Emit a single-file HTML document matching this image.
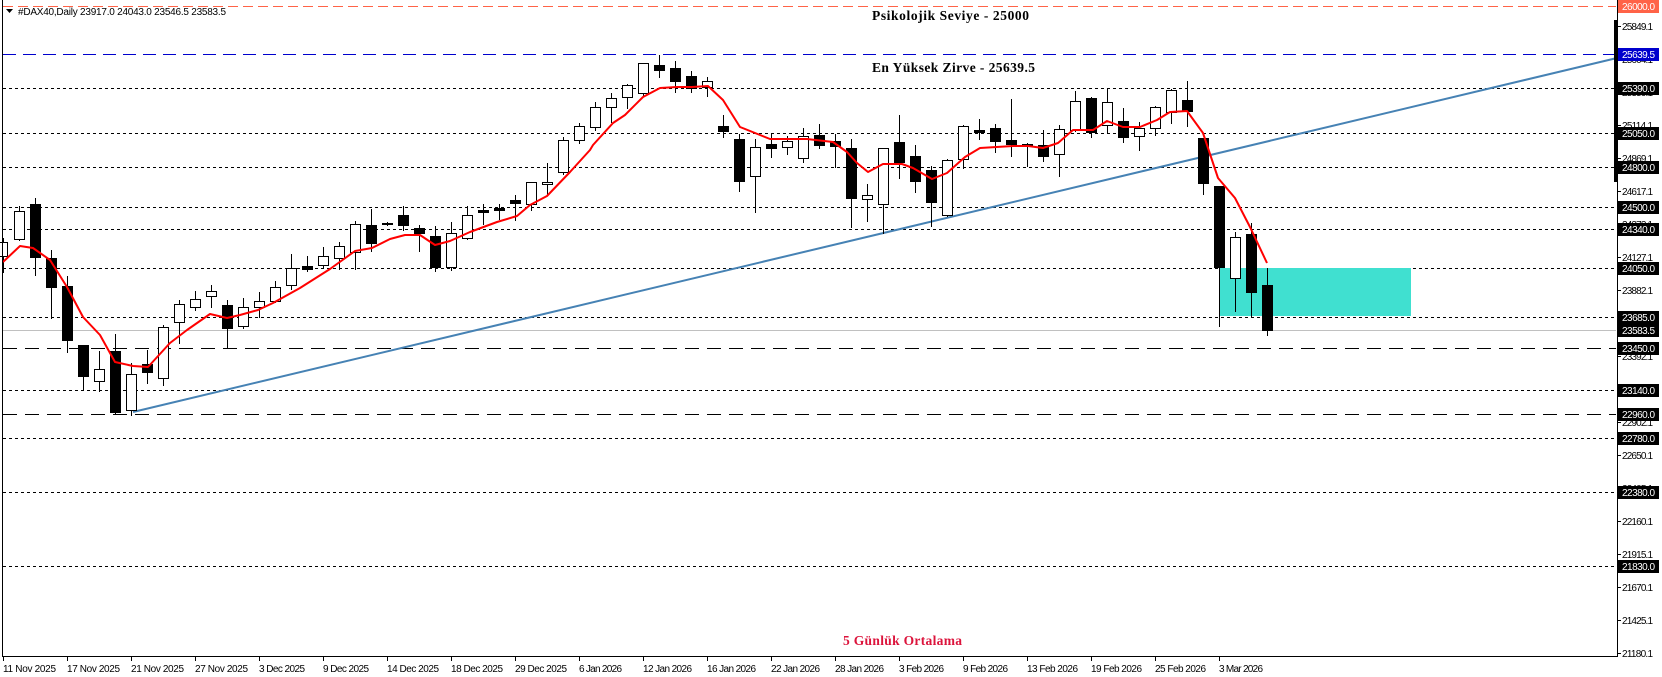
<!DOCTYPE html>
<html><head><meta charset="utf-8"><style>
html,body{margin:0;padding:0;background:#fff;}
svg{display:block;}
.ax{font-family:"Liberation Sans",sans-serif;font-size:10px;fill:#000;}
.hl{font-family:"Liberation Sans",sans-serif;font-size:10px;fill:#fff;}
.an{font-family:"Liberation Serif",serif;font-weight:bold;font-size:13.5px;fill:#000;}
</style></head><body>
<svg width="1662" height="677" viewBox="0 0 1662 677" xmlns="http://www.w3.org/2000/svg">
<rect width="1662" height="677" fill="#fff"/>
<g shape-rendering="crispEdges" stroke-width="1" fill="none">
<line x1="3" y1="6.5" x2="1616" y2="6.5" stroke="#ff6347" stroke-dasharray="10 5"/>
<line x1="3" y1="54.5" x2="1616" y2="54.5" stroke="#0000cd" stroke-dasharray="13 7"/>
<g stroke="#000" stroke-dasharray="3 3">
<line x1="3" y1="88.5" x2="1616" y2="88.5"/>
<line x1="3" y1="133.5" x2="1616" y2="133.5"/>
<line x1="3" y1="167.5" x2="1616" y2="167.5"/>
<line x1="3" y1="207.5" x2="1616" y2="207.5"/>
<line x1="3" y1="229.5" x2="1616" y2="229.5"/>
<line x1="3" y1="268.5" x2="1616" y2="268.5"/>
<line x1="3" y1="317.5" x2="1616" y2="317.5"/>
<line x1="3" y1="390.5" x2="1616" y2="390.5"/>
<line x1="3" y1="438.5" x2="1616" y2="438.5"/>
<line x1="3" y1="492.5" x2="1616" y2="492.5"/>
<line x1="3" y1="566.5" x2="1616" y2="566.5"/>
</g>
<g stroke="#000" stroke-dasharray="14 8">
<line x1="3" y1="348.5" x2="1616" y2="348.5"/>
<line x1="3" y1="414.5" x2="1616" y2="414.5"/>
</g>
<line x1="3" y1="330.5" x2="1616" y2="330.5" stroke="#c0c0c0"/>
</g>
<line x1="133" y1="412" x2="1617" y2="58" stroke="#4682b4" stroke-width="2"/>
<rect x="1220" y="268" width="191" height="48" fill="#40e0d0"/>
<g shape-rendering="crispEdges">
<g stroke="#000" stroke-width="1">
<line x1="3.5" y1="238" x2="3.5" y2="273"/><line x1="19.5" y1="206" x2="19.5" y2="241"/><line x1="35.5" y1="198" x2="35.5" y2="276"/><line x1="51.5" y1="250" x2="51.5" y2="319"/><line x1="67.5" y1="276" x2="67.5" y2="353"/><line x1="83.5" y1="345" x2="83.5" y2="391"/><line x1="99.5" y1="351" x2="99.5" y2="392"/><line x1="115.5" y1="334" x2="115.5" y2="414"/><line x1="131.5" y1="363" x2="131.5" y2="416"/><line x1="147.5" y1="350" x2="147.5" y2="384"/><line x1="163.5" y1="325" x2="163.5" y2="386"/><line x1="179.5" y1="300" x2="179.5" y2="344"/><line x1="195.5" y1="291" x2="195.5" y2="311"/><line x1="211.5" y1="285" x2="211.5" y2="308"/><line x1="227.5" y1="300" x2="227.5" y2="348"/><line x1="243.5" y1="298" x2="243.5" y2="329"/><line x1="259.5" y1="292" x2="259.5" y2="318"/><line x1="275.5" y1="281" x2="275.5" y2="303"/><line x1="291.5" y1="254" x2="291.5" y2="290"/><line x1="307.5" y1="256" x2="307.5" y2="272"/><line x1="323.5" y1="247" x2="323.5" y2="268"/><line x1="339.5" y1="242" x2="339.5" y2="270"/><line x1="355.5" y1="221" x2="355.5" y2="270"/><line x1="371.5" y1="209" x2="371.5" y2="252"/><line x1="387.5" y1="222" x2="387.5" y2="226"/><line x1="403.5" y1="206" x2="403.5" y2="231"/><line x1="419.5" y1="225" x2="419.5" y2="252"/><line x1="435.5" y1="226" x2="435.5" y2="272"/><line x1="451.5" y1="222" x2="451.5" y2="271"/><line x1="467.5" y1="206" x2="467.5" y2="240"/><line x1="483.5" y1="204" x2="483.5" y2="225"/><line x1="499.5" y1="204" x2="499.5" y2="220"/><line x1="515.5" y1="195" x2="515.5" y2="221"/><line x1="531.5" y1="182" x2="531.5" y2="211"/><line x1="547.5" y1="163" x2="547.5" y2="195"/><line x1="563.5" y1="137" x2="563.5" y2="175"/><line x1="579.5" y1="123" x2="579.5" y2="144"/><line x1="595.5" y1="102" x2="595.5" y2="131"/><line x1="611.5" y1="93" x2="611.5" y2="123"/><line x1="627.5" y1="84" x2="627.5" y2="109"/><line x1="643.5" y1="63" x2="643.5" y2="97"/><line x1="659.5" y1="55" x2="659.5" y2="78"/><line x1="675.5" y1="61" x2="675.5" y2="93"/><line x1="691.5" y1="71" x2="691.5" y2="93"/><line x1="707.5" y1="77" x2="707.5" y2="97"/><line x1="723.5" y1="115" x2="723.5" y2="138"/><line x1="739.5" y1="134" x2="739.5" y2="192"/><line x1="755.5" y1="139" x2="755.5" y2="213"/><line x1="771.5" y1="134" x2="771.5" y2="158"/><line x1="787.5" y1="136" x2="787.5" y2="155"/><line x1="803.5" y1="128" x2="803.5" y2="163"/><line x1="819.5" y1="124" x2="819.5" y2="149"/><line x1="835.5" y1="134" x2="835.5" y2="168"/><line x1="851.5" y1="139" x2="851.5" y2="228"/><line x1="867.5" y1="184" x2="867.5" y2="222"/><line x1="883.5" y1="148" x2="883.5" y2="234"/><line x1="899.5" y1="115" x2="899.5" y2="179"/><line x1="915.5" y1="145" x2="915.5" y2="193"/><line x1="931.5" y1="166" x2="931.5" y2="227"/><line x1="947.5" y1="159" x2="947.5" y2="217"/><line x1="963.5" y1="125" x2="963.5" y2="169"/><line x1="979.5" y1="119" x2="979.5" y2="140"/><line x1="995.5" y1="124" x2="995.5" y2="153"/><line x1="1011.5" y1="99" x2="1011.5" y2="157"/><line x1="1027.5" y1="143" x2="1027.5" y2="167"/><line x1="1043.5" y1="130" x2="1043.5" y2="162"/><line x1="1059.5" y1="125" x2="1059.5" y2="177"/><line x1="1075.5" y1="91" x2="1075.5" y2="132"/><line x1="1091.5" y1="97" x2="1091.5" y2="138"/><line x1="1107.5" y1="88" x2="1107.5" y2="134"/><line x1="1123.5" y1="108" x2="1123.5" y2="143"/><line x1="1139.5" y1="122" x2="1139.5" y2="151"/><line x1="1155.5" y1="106" x2="1155.5" y2="136"/><line x1="1171.5" y1="89" x2="1171.5" y2="124"/><line x1="1187.5" y1="81" x2="1187.5" y2="127"/><line x1="1203.5" y1="138" x2="1203.5" y2="195"/><line x1="1219.5" y1="186" x2="1219.5" y2="327"/><line x1="1235.5" y1="232" x2="1235.5" y2="312"/><line x1="1251.5" y1="223" x2="1251.5" y2="317"/><line x1="1267.5" y1="268" x2="1267.5" y2="336"/>
</g>
<g fill="#000">
<rect x="30" y="204" width="11" height="54"/><rect x="46" y="258" width="11" height="30"/><rect x="62" y="286" width="11" height="55"/><rect x="78" y="345" width="11" height="32"/><rect x="110" y="351" width="11" height="62"/><rect x="142" y="364" width="11" height="9"/><rect x="222" y="305" width="11" height="24"/><rect x="302" y="266" width="11" height="4"/><rect x="366" y="225" width="11" height="19"/><rect x="382" y="223" width="11" height="2"/><rect x="398" y="215" width="11" height="11"/><rect x="414" y="228" width="11" height="6"/><rect x="430" y="236" width="11" height="32"/><rect x="478" y="210" width="11" height="3"/><rect x="494" y="208" width="11" height="3"/><rect x="510" y="200" width="11" height="4"/><rect x="654" y="65" width="11" height="6"/><rect x="670" y="68" width="11" height="14"/><rect x="686" y="76" width="11" height="13"/><rect x="718" y="126" width="11" height="6"/><rect x="734" y="139" width="11" height="43"/><rect x="766" y="144" width="11" height="5"/><rect x="814" y="135" width="11" height="11"/><rect x="830" y="141" width="11" height="6"/><rect x="846" y="148" width="11" height="51"/><rect x="894" y="142" width="11" height="21"/><rect x="910" y="156" width="11" height="26"/><rect x="926" y="170" width="11" height="33"/><rect x="974" y="130" width="11" height="3"/><rect x="990" y="128" width="11" height="14"/><rect x="1006" y="140" width="11" height="5"/><rect x="1022" y="144" width="11" height="2"/><rect x="1038" y="145" width="11" height="12"/><rect x="1086" y="98" width="11" height="35"/><rect x="1118" y="121" width="11" height="17"/><rect x="1182" y="100" width="11" height="12"/><rect x="1198" y="138" width="11" height="46"/><rect x="1214" y="186" width="11" height="82"/><rect x="1246" y="234" width="11" height="59"/><rect x="1262" y="285" width="11" height="46"/>
</g>
<g fill="#fff" stroke="#000">
<rect x="-1.5" y="242.5" width="9" height="14"/><rect x="14.5" y="211.5" width="10" height="28"/><rect x="94.5" y="369.5" width="10" height="12"/><rect x="126.5" y="374.5" width="10" height="36"/><rect x="158.5" y="327.5" width="10" height="51"/><rect x="174.5" y="304.5" width="10" height="18"/><rect x="190.5" y="299.5" width="10" height="8"/><rect x="206.5" y="291.5" width="10" height="5"/><rect x="238.5" y="307.5" width="10" height="19"/><rect x="254.5" y="301.5" width="10" height="6"/><rect x="270.5" y="287.5" width="10" height="14"/><rect x="286.5" y="268.5" width="10" height="17"/><rect x="318.5" y="256.5" width="10" height="9"/><rect x="334.5" y="246.5" width="10" height="12"/><rect x="350.5" y="224.5" width="10" height="28"/><rect x="446.5" y="233.5" width="10" height="34"/><rect x="462.5" y="215.5" width="10" height="23"/><rect x="526.5" y="182.5" width="10" height="22"/><rect x="542.5" y="182.5" width="10" height="2"/><rect x="558.5" y="140.5" width="10" height="32"/><rect x="574.5" y="126.5" width="10" height="14"/><rect x="590.5" y="107.5" width="10" height="20"/><rect x="606.5" y="98.5" width="10" height="9"/><rect x="622.5" y="85.5" width="10" height="12"/><rect x="638.5" y="63.5" width="10" height="30"/><rect x="702.5" y="81.5" width="10" height="6"/><rect x="750.5" y="147.5" width="10" height="29"/><rect x="782.5" y="141.5" width="10" height="6"/><rect x="798.5" y="136.5" width="10" height="22"/><rect x="862.5" y="195.5" width="10" height="4"/><rect x="878.5" y="148.5" width="10" height="56"/><rect x="942.5" y="160.5" width="10" height="55"/><rect x="958.5" y="126.5" width="10" height="33"/><rect x="1054.5" y="129.5" width="10" height="25"/><rect x="1070.5" y="101.5" width="10" height="29"/><rect x="1102.5" y="102.5" width="10" height="23"/><rect x="1134.5" y="128.5" width="10" height="8"/><rect x="1150.5" y="107.5" width="10" height="21"/><rect x="1166.5" y="90.5" width="10" height="22"/><rect x="1230.5" y="237.5" width="10" height="41"/>
</g>
</g>
<polyline fill="none" stroke="#ff0000" stroke-width="2" stroke-linejoin="round" points="3,262 20,246 33,248 50,260 67,287 83,317 100,335 115,362 133,366 148,367 170,343 187,330 210,314 227,318 240,315 258,310 273,303 300,288 330,269 355,251 372,248 390,239 405,235 420,235 435,245 450,241 470,232 497,222 517,216 530,205 547,196 570,172 590,150 593,145 613,123 625,115 643,97 660,88 677,87 692,87 708,86 723,100 740,127 760,135 770,139 807,139 833,142 847,152 857,163 868,172 883,164 902,164 913,168 932,179 947,173 965,157 980,148 1013,146 1028,146 1043,148 1058,143 1073,130 1093,130 1107,121 1123,127 1140,127 1157,120 1170,112 1187,111 1203,133 1218,178 1235,198 1250,227 1267,263"/>
<g shape-rendering="crispEdges" stroke="#000">
<line x1="2.5" y1="0" x2="2.5" y2="656"/>
<line x1="2" y1="656.5" x2="1618" y2="656.5"/>
<line x1="1617.5" y1="0" x2="1617.5" y2="657"/>
</g>
<rect x="1614" y="20" width="3" height="162" fill="#000"/>
<g shape-rendering="crispEdges" stroke="#000">
<line x1="1618" y1="26.5" x2="1621" y2="26.5"/><line x1="1618" y1="59.5" x2="1621" y2="59.5"/><line x1="1618" y1="92.5" x2="1621" y2="92.5"/><line x1="1618" y1="125.5" x2="1621" y2="125.5"/><line x1="1618" y1="158.5" x2="1621" y2="158.5"/><line x1="1618" y1="191.5" x2="1621" y2="191.5"/><line x1="1618" y1="224.5" x2="1621" y2="224.5"/><line x1="1618" y1="257.5" x2="1621" y2="257.5"/><line x1="1618" y1="290.5" x2="1621" y2="290.5"/><line x1="1618" y1="323.5" x2="1621" y2="323.5"/><line x1="1618" y1="356.5" x2="1621" y2="356.5"/><line x1="1618" y1="389.5" x2="1621" y2="389.5"/><line x1="1618" y1="422.5" x2="1621" y2="422.5"/><line x1="1618" y1="455.5" x2="1621" y2="455.5"/><line x1="1618" y1="488.5" x2="1621" y2="488.5"/><line x1="1618" y1="521.5" x2="1621" y2="521.5"/><line x1="1618" y1="554.5" x2="1621" y2="554.5"/><line x1="1618" y1="587.5" x2="1621" y2="587.5"/><line x1="1618" y1="620.5" x2="1621" y2="620.5"/><line x1="1618" y1="653.5" x2="1621" y2="653.5"/>
</g>
<g class="ax">
<text x="1622" y="30" textLength="31">25849.1</text><text x="1622" y="63" textLength="31">25604.1</text><text x="1622" y="96" textLength="31">25359.1</text><text x="1622" y="129" textLength="31">25114.1</text><text x="1622" y="162" textLength="31">24869.1</text><text x="1622" y="195" textLength="31">24617.1</text><text x="1622" y="228" textLength="31">24372.1</text><text x="1622" y="261" textLength="31">24127.1</text><text x="1622" y="294" textLength="31">23882.1</text><text x="1622" y="327" textLength="31">23637.1</text><text x="1622" y="360" textLength="31">23392.1</text><text x="1622" y="393" textLength="31">23147.1</text><text x="1622" y="426" textLength="31">22902.1</text><text x="1622" y="459" textLength="31">22650.1</text><text x="1622" y="492" textLength="31">22405.1</text><text x="1622" y="525" textLength="31">22160.1</text><text x="1622" y="558" textLength="31">21915.1</text><text x="1622" y="591" textLength="31">21670.1</text><text x="1622" y="624" textLength="31">21425.1</text><text x="1622" y="657" textLength="31">21180.1</text>
</g>
<rect x="1618" y="0" width="41" height="13" fill="#ff6347"/>
<rect x="1618" y="48" width="41" height="13" fill="#0000cd"/>
<g fill="#000">
<rect x="1618" y="82" width="41" height="13"/><rect x="1618" y="127" width="41" height="13"/><rect x="1618" y="161" width="41" height="13"/><rect x="1618" y="201" width="41" height="13"/><rect x="1618" y="223" width="41" height="13"/><rect x="1618" y="262" width="41" height="13"/><rect x="1618" y="311" width="41" height="13"/><rect x="1618" y="324" width="41" height="13"/><rect x="1618" y="342" width="41" height="13"/><rect x="1618" y="384" width="41" height="13"/><rect x="1618" y="408" width="41" height="13"/><rect x="1618" y="432" width="41" height="13"/><rect x="1618" y="486" width="41" height="13"/><rect x="1618" y="560" width="41" height="13"/>
</g>
<g class="hl">
<text x="1622" y="10" textLength="33">26000.0</text><text x="1622" y="58" textLength="33">25639.5</text><text x="1622" y="92" textLength="33">25390.0</text><text x="1622" y="137" textLength="33">25050.0</text><text x="1622" y="171" textLength="33">24800.0</text><text x="1622" y="211" textLength="33">24500.0</text><text x="1622" y="233" textLength="33">24340.0</text><text x="1622" y="272" textLength="33">24050.0</text><text x="1622" y="321" textLength="33">23685.0</text><text x="1622" y="334" textLength="33">23583.5</text><text x="1622" y="352" textLength="33">23450.0</text><text x="1622" y="394" textLength="33">23140.0</text><text x="1622" y="418" textLength="33">22960.0</text><text x="1622" y="442" textLength="33">22780.0</text><text x="1622" y="496" textLength="33">22380.0</text><text x="1622" y="570" textLength="33">21830.0</text>
</g>
<g shape-rendering="crispEdges" stroke="#000">
<line x1="3.5" y1="657" x2="3.5" y2="661"/><line x1="67.5" y1="657" x2="67.5" y2="661"/><line x1="131.5" y1="657" x2="131.5" y2="661"/><line x1="195.5" y1="657" x2="195.5" y2="661"/><line x1="259.5" y1="657" x2="259.5" y2="661"/><line x1="323.5" y1="657" x2="323.5" y2="661"/><line x1="387.5" y1="657" x2="387.5" y2="661"/><line x1="451.5" y1="657" x2="451.5" y2="661"/><line x1="515.5" y1="657" x2="515.5" y2="661"/><line x1="579.5" y1="657" x2="579.5" y2="661"/><line x1="643.5" y1="657" x2="643.5" y2="661"/><line x1="707.5" y1="657" x2="707.5" y2="661"/><line x1="771.5" y1="657" x2="771.5" y2="661"/><line x1="835.5" y1="657" x2="835.5" y2="661"/><line x1="899.5" y1="657" x2="899.5" y2="661"/><line x1="963.5" y1="657" x2="963.5" y2="661"/><line x1="1027.5" y1="657" x2="1027.5" y2="661"/><line x1="1091.5" y1="657" x2="1091.5" y2="661"/><line x1="1155.5" y1="657" x2="1155.5" y2="661"/><line x1="1219.5" y1="657" x2="1219.5" y2="661"/>
</g>
<g class="ax">
<text x="3" y="672" textLength="53">11 Nov 2025</text><text x="67" y="672" textLength="53">17 Nov 2025</text><text x="131" y="672" textLength="53">21 Nov 2025</text><text x="195" y="672" textLength="53">27 Nov 2025</text><text x="259" y="672" textLength="46">3 Dec 2025</text><text x="323" y="672" textLength="46">9 Dec 2025</text><text x="387" y="672" textLength="52">14 Dec 2025</text><text x="451" y="672" textLength="52">18 Dec 2025</text><text x="515" y="672" textLength="52">29 Dec 2025</text><text x="579" y="672" textLength="43">6 Jan 2026</text><text x="643" y="672" textLength="49">12 Jan 2026</text><text x="707" y="672" textLength="49">16 Jan 2026</text><text x="771" y="672" textLength="49">22 Jan 2026</text><text x="835" y="672" textLength="49">28 Jan 2026</text><text x="899" y="672" textLength="45">3 Feb 2026</text><text x="963" y="672" textLength="45">9 Feb 2026</text><text x="1027" y="672" textLength="51">13 Feb 2026</text><text x="1091" y="672" textLength="51">19 Feb 2026</text><text x="1155" y="672" textLength="51">25 Feb 2026</text><text x="1219" y="672" textLength="44">3 Mar 2026</text>
</g>
<polygon points="6,9 13,9 9.5,13" fill="#000"/>
<text x="18" y="15" class="ax" font-size="11" textLength="208">#DAX40,Daily  23917.0 24043.0 23546.5 23583.5</text>
<text x="872" y="20" class="an" textLength="157">Psikolojik Seviye - 25000</text>
<text x="872" y="72" class="an" textLength="163">En Yüksek Zirve - 25639.5</text>
<text x="843" y="645" class="an" style="fill:#dc143c" textLength="119">5 Günlük Ortalama</text>
</svg>
</body></html>
